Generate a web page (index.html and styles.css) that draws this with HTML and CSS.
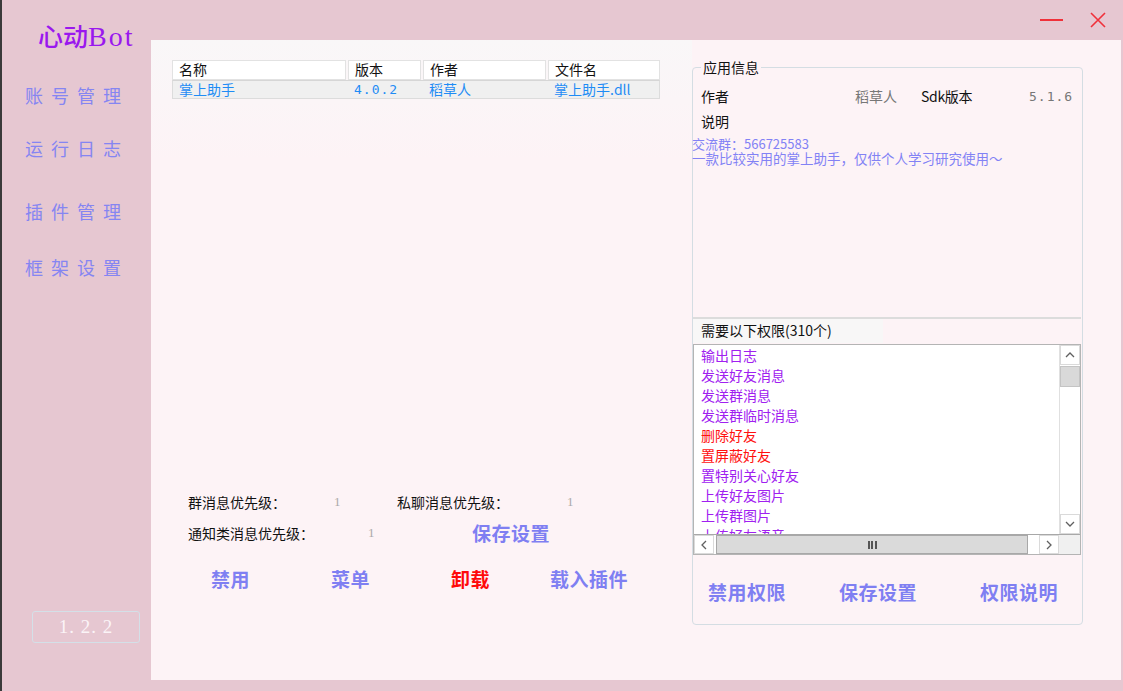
FILE: index.html
```html
<!DOCTYPE html>
<html lang="zh">
<head>
<meta charset="utf-8">
<title>心动Bot</title>
<link rel="stylesheet" href="styles.css">
</head>
<body>
<div class="app">
  <aside class="sidebar">
    <div class="logo">心动<span class="bot">Bot</span></div>
    <nav class="nav">
      <div class="nav-item n1">账号管理</div>
      <div class="nav-item n2">运行日志</div>
      <div class="nav-item n3">插件管理</div>
      <div class="nav-item n4">框架设置</div>
    </nav>
    <div class="version">1. 2. 2</div>
  </aside>
  <div class="right-col">
    <div class="titlebar">
      <span class="win-min"></span>
      <svg class="win-close" width="18" height="18" viewBox="0 0 18 18"><path d="M2 2 L16 16 M16 2 L2 16" stroke="#f0303a" stroke-width="1.6" fill="none"/></svg>
    </div>
    <main class="panel">
      <section class="plugins">
        <div class="table">
          <div class="thead">
            <div class="th c1">名称</div>
            <div class="th c2">版本</div>
            <div class="th c3">作者</div>
            <div class="th c4">文件名</div>
          </div>
          <div class="trow">
            <div class="td c1">掌上助手</div>
            <div class="td c2 mono">4.0.2</div>
            <div class="td c3">稻草人</div>
            <div class="td c4">掌上助手.dll</div>
          </div>
        </div>
        <div class="prio">
          <div class="prio-row">
            <span class="lbl l1">群消息优先级：</span><span class="val v1">1</span>
            <span class="lbl l2">私聊消息优先级：</span><span class="val v2">1</span>
          </div>
          <div class="prio-row">
            <span class="lbl l3">通知类消息优先级：</span><span class="val v3">1</span>
            <span class="btn save1">保存设置</span>
          </div>
        </div>
        <div class="actions">
          <span class="btn a1">禁用</span>
          <span class="btn a2">菜单</span>
          <span class="btn a3 red">卸载</span>
          <span class="btn a4">载入插件</span>
        </div>
      </section>
      <section class="info">
        <fieldset class="group">
          <legend>应用信息</legend>
          <div class="kv">
            <span class="k">作者</span><span class="v author">稻草人</span>
            <span class="k sdk">Sdk版本</span><span class="v sdkv">5.1.6</span>
          </div>
          <div class="kv2"><span class="k">说明</span></div>
          <div class="desc">
            <div class="desc-line">交流群：566725583</div>
            <div class="desc-line">一款比较实用的掌上助手，仅供个人学习研究使用～</div>
          </div>
          <div class="sep"></div>
          <div class="perm-title">需要以下权限(310个)</div>
          <div class="listbox">
            <div class="list-area">
              <ul class="items">
                <li>输出日志</li>
                <li>发送好友消息</li>
                <li>发送群消息</li>
                <li>发送群临时消息</li>
                <li class="danger">删除好友</li>
                <li class="danger">置屏蔽好友</li>
                <li>置特别关心好友</li>
                <li>上传好友图片</li>
                <li>上传群图片</li>
                <li>上传好友语音</li>
              </ul>
              <div class="vscroll">
                <div class="sb-btn"><svg width="12" height="8" viewBox="0 0 12 8"><path d="M2 6 L6 2 L10 6" stroke="#606060" stroke-width="1.3" fill="none"/></svg></div>
                <div class="vthumb"></div>
                <div class="vtrack"></div>
                <div class="sb-btn"><svg width="12" height="8" viewBox="0 0 12 8"><path d="M2 2 L6 6 L10 2" stroke="#606060" stroke-width="1.3" fill="none"/></svg></div>
              </div>
            </div>
            <div class="hscroll">
              <div class="sb-btn h"><svg width="8" height="12" viewBox="0 0 8 12"><path d="M6 2 L2 6 L6 10" stroke="#606060" stroke-width="1.3" fill="none"/></svg></div>
              <div class="hthumb"><span class="grip"></span></div>
              <div class="htrack"></div>
              <div class="sb-btn h"><svg width="8" height="12" viewBox="0 0 8 12"><path d="M2 2 L6 6 L2 10" stroke="#606060" stroke-width="1.3" fill="none"/></svg></div>
              <div class="corner"></div>
            </div>
          </div>
          <div class="perm-actions">
            <span class="btn p1">禁用权限</span>
            <span class="btn p2">保存设置</span>
            <span class="btn p3">权限说明</span>
          </div>
        </fieldset>
      </section>
    </main>
  </div>
</div>
</body>
</html>
```

FILE: styles.css
```css
* { box-sizing: border-box; }
html, body {
  margin: 0;
  padding: 0;
  width: 1123px;
  height: 691px;
  overflow: hidden;
  background: #e6c7d1;
  font-family: "Noto Sans CJK SC", "Noto Sans", sans-serif;
}
.app {
  display: flex;
  width: 1123px;
  height: 691px;
  border-left: 2px solid #3a3a3a;
}
.sidebar {
  width: 149px;
  flex: none;
  display: flex;
  flex-direction: column;
}
.logo {
  margin: 18px 0 0 36px;
  height: 34px;
  font-size: 25px;
  line-height: 34px;
  color: #9a18ee;
  font-weight: 500;
}
.logo .bot {
  font-family: "Liberation Serif", serif;
  font-size: 28px;
  letter-spacing: 2px;
}
.nav { display: flex; flex-direction: column; }
.nav-item {
  margin-left: 23px;
  font-size: 18px;
  line-height: 24px;
  letter-spacing: 8px;
  color: #8585f2;
}
.n1 { margin-top: 31px; }
.n2 { margin-top: 29px; }
.n3 { margin-top: 39px; }
.n4 { margin-top: 32px; }
.version {
  margin: auto 0 48px 30px;
  width: 108px;
  height: 32px;
  border: 1.5px solid #d4e0e8;
  border-radius: 3px;
  color: #fbf4f7;
  font-family: "Liberation Serif", serif;
  font-size: 19px;
  line-height: 29px;
  text-align: center;
  letter-spacing: 1px;
}
.right-col {
  flex: 1;
  display: flex;
  flex-direction: column;
}
.titlebar {
  height: 40px;
  position: relative;
}
.win-min {
  position: absolute;
  left: 889px;
  top: 19px;
  width: 23px;
  height: 2px;
  background: #f0303a;
}
.win-close {
  position: absolute;
  left: 938px;
  top: 11px;
}
.panel {
  width: 970px;
  height: 640px;
  background: #fdf3f6;
  display: flex;
}
.plugins {
  width: 541px;
  flex: none;
  padding: 20px 0 0 21px;
  display: flex;
  flex-direction: column;
  background: linear-gradient(#f9f7f8, #fdf3f6 120px);
}
.table { width: 488px; font-size: 14px; }
.thead { display: flex; gap: 2px; height: 20px; }
.th {
  background: #ffffff;
  border: 1px solid #e2e2e2;
  color: #111;
  line-height: 17px;
  padding-left: 6px;
}
.c1 { width: 174px; }
.c2 { width: 73px; }
.c3 { width: 123px; }
.c4 { width: 110px; }
.thead .c4 { width: 112px; }
.trow {
  display: flex;
  gap: 2px;
  height: 19px;
  background: #f0f0f0;
  border: 1px solid #dcdcdc;
  border-top: 1px solid #d6d6d6;
}
.td {
  color: #1e8cf5;
  line-height: 17px;
  padding-left: 6px;
}
.trow .c1 { width: 173px; }
.mono { font-family: "DejaVu Sans Mono", monospace; font-size: 13px; letter-spacing: 1px; }
.prio { margin-top: 387px; font-size: 14px; color: #111; }
.prio-row { display: flex; align-items: center; height: 31px; }
.lbl { display: inline-block; }
.l1 { margin-left: 16px; width: 146px; }
.v1 { width: 63px; }
.l2 { width: 170px; }
.l3 { margin-left: 16px; width: 180px; }
.v3 { width: 104px; }
.val { color: #aaaaaa; font-family: "Liberation Serif", serif; font-size: 13px; }
.btn {
  display: inline-block;
  font-weight: 700;
  font-size: 19px;
  color: #7f7ff2;
  letter-spacing: 0.5px;
}
.red { color: #ff0a0a; }
.actions { display: flex; margin-top: 15px; height: 30px; align-items: center; }
.a1 { margin-left: 39px; width: 120px; }
.a2 { width: 120px; }
.a3 { width: 99px; }
.info { flex: none; width: 429px; padding: 18px 0 0 0; }
.group {
  margin: 0;
  padding: 0;
  width: 391px;
  height: 567px;
  border: 1px solid #d4dde3;
  border-radius: 4px;
  display: flex;
  flex-direction: column;
  min-width: 0;
}
.group legend {
  margin-left: 8px;
  padding: 0 2px;
  font-size: 14px;
  color: #111;
  line-height: 18px;
}
.kv { display: flex; align-items: center; height: 22px; margin-top: 9px; font-size: 14px; }
.k { color: #111; }
.kv .k:first-child { margin-left: 8px; width: 154px; }
.author { color: #777; width: 66px; }
.sdk { width: 108px; letter-spacing: -0.3px; }
.sdkv { color: #777; font-family: "DejaVu Sans Mono", monospace; font-size: 13px; letter-spacing: 1px; }
.kv2 { margin: 3px 0 0 8px; height: 22px; font-size: 14px; line-height: 22px; }
.desc {
  margin-left: -1px;
  margin-top: 4px;
  color: #8282f5;
  font-size: 13.5px;
  white-space: nowrap;
}
.desc-line { height: 15px; line-height: 15px; }
.desc-line:first-child { font-size: 13px; }
.sep { margin-top: 151px; height: 2px; background: #dcdcdc; margin-right: 1px; }
.perm-title {
  width: 190px;
  height: 24px;
  font-size: 14px;
  line-height: 22px;
  padding-left: 8px;
  color: #111;
  background: #f8f7f7;
}
.listbox {
  margin-top: 1px;
  margin-right: 1px;
  height: 211px;
  border: 1px solid #b4b4b4;
  background: #fff;
  display: flex;
  flex-direction: column;
}
.list-area { flex: 1; display: flex; overflow: hidden; }
.items {
  list-style: none;
  margin: 0;
  padding: 0 0 0 7px;
  flex: 1;
  font-size: 14px;
  line-height: 20px;
  color: #a020f0;
  overflow: hidden;
}
.items li.danger { color: #ff1010; }
.vscroll {
  width: 21px;
  display: flex;
  flex-direction: column;
  border-left: 1px solid #e0e0e0;
  background: #fff;
}
.sb-btn {
  width: 20px;
  height: 20px;
  display: flex;
  align-items: center;
  justify-content: center;
  background: #fff;
  border: 1px solid #dadada;
}
.vthumb { height: 21px; background: #d9d9d9; border: 1px solid #c4c4c4; margin-top: 1px; }
.vtrack { flex: 1; background: #fff; }
.hscroll { height: 20px; display: flex; border-top: 1px solid #a8a8a8; }
.sb-btn.h { height: 19px; }
.hthumb {
  width: 312px;
  margin-left: 2px;
  background: #dadada;
  border: 1px solid #a8a8a8;
  display: flex;
  align-items: center;
  justify-content: center;
}
.grip {
  width: 9px;
  height: 8px;
  background: repeating-linear-gradient(90deg, #555 0 2px, transparent 2px 3.5px);
}
.htrack { width: 11px; background: #fff; }
.corner { flex: 1; background: #f0f0f0; }
.perm-actions { display: flex; align-items: center; height: 30px; margin-top: 21px; }
.p1 { margin-left: 15px; width: 131px; }
.p2 { width: 141px; }
```
